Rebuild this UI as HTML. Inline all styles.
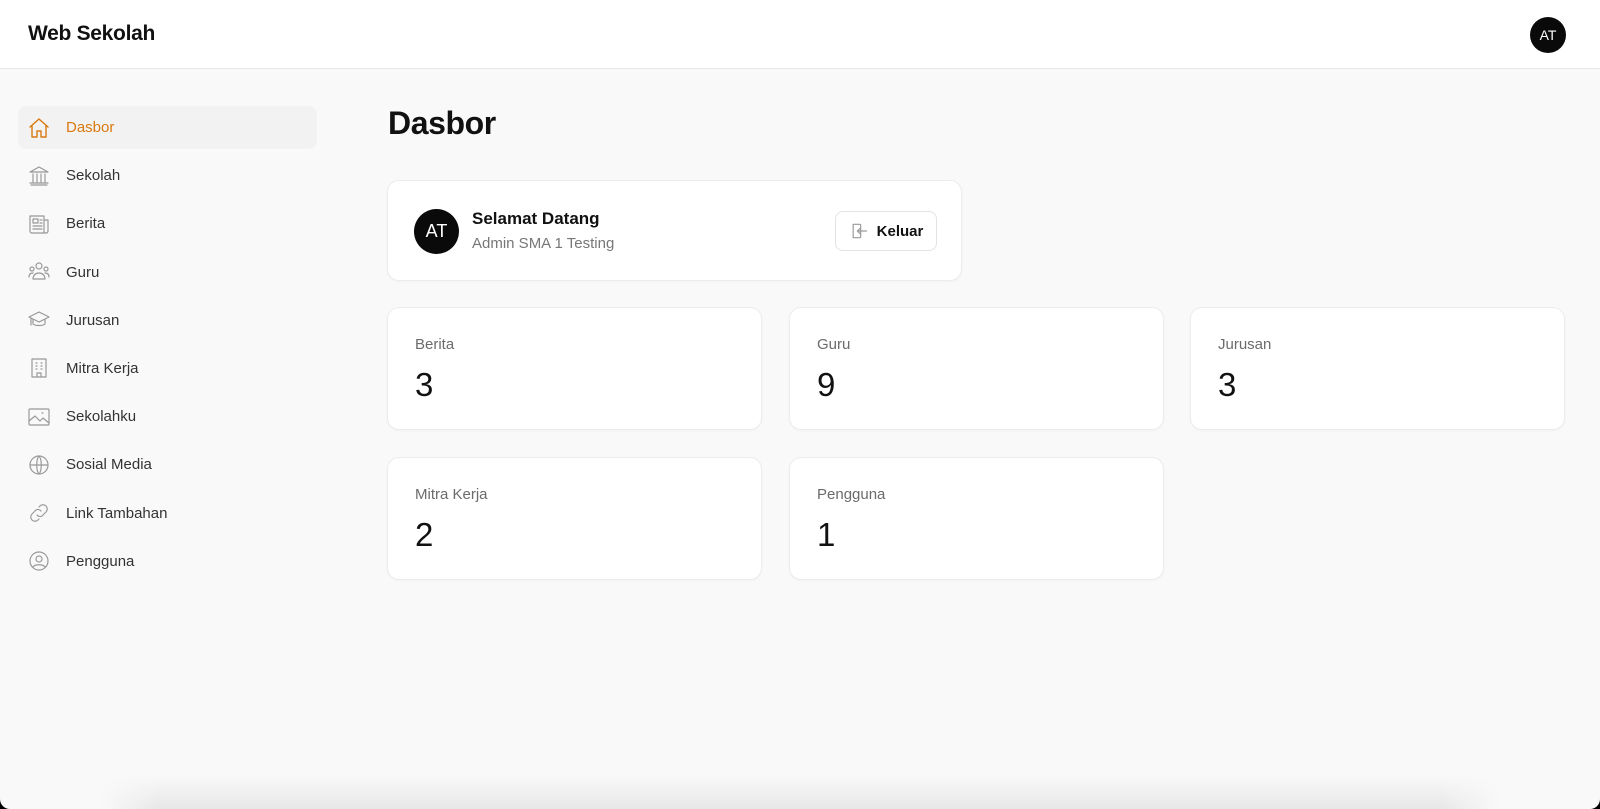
<!DOCTYPE html>
<html><head><meta charset="utf-8"><style>
*{box-sizing:border-box;margin:0;padding:0}
html,body{width:1600px;height:809px;overflow:hidden;background:#000}
body{font-family:"Liberation Sans",sans-serif;color:#111}
.page{position:absolute;left:0;top:0;width:1600px;height:809px;background:#f9f9f9;border-radius:0 0 10px 10px;overflow:hidden}
.hdr{position:absolute;left:0;top:0;width:1600px;height:69px;background:#fff;border-bottom:1px solid #e8e8e8}
.logo{position:absolute;left:28px;top:22px;font-size:21px;font-weight:700;letter-spacing:-0.3px}
.av{position:absolute;border-radius:50%;background:#0a0a0a;color:#fff;display:flex;align-items:center;justify-content:center}
.nav{position:absolute;left:18px;top:106px;width:299px}
.it{height:43px;margin-bottom:5.2px;display:flex;align-items:center;padding-left:9px;font-size:15px;color:#333;border-radius:8px}
.it svg{width:24px;height:24px;margin-right:15px;fill:none;stroke:#999;stroke-width:1.2;stroke-linecap:round;stroke-linejoin:round}
.it.on{background:#f2f2f2;color:#d97a0f}
.it.on svg{stroke:#d97a0f;stroke-width:1.4}
h1{position:absolute;left:388px;top:105px;font-size:32px;font-weight:700;letter-spacing:-0.4px}
.card{position:absolute;background:#fff;border:1px solid #ececec;border-radius:12px;box-shadow:0 1px 2px rgba(0,0,0,.03)}
.lbl{position:absolute;left:27px;top:28px;font-size:15px;color:#6b6b6b}
.num{position:absolute;left:27px;top:58px;font-size:33px;color:#111}
.btn{position:absolute;left:447px;top:30px;width:102px;height:40px;border:1px solid #e3e3e3;border-radius:8px;display:flex;align-items:center;justify-content:center;font-size:15px;font-weight:700;background:#fff}
.shadow{position:absolute;left:100px;top:775px;width:1400px;height:34px;background:linear-gradient(to bottom,rgba(0,0,0,0),rgba(0,0,0,.07));-webkit-mask-image:linear-gradient(to right,transparent,#000 60px,#000 1340px,transparent);mask-image:linear-gradient(to right,transparent,#000 60px,#000 1340px,transparent)}
</style></head><body><div class="page">
<div class="hdr"><div class="logo">Web Sekolah</div>
<div class="av" style="left:1530px;top:17px;width:36px;height:36px;font-size:14px">AT</div></div>
<div class="nav">
<div class="it on"><svg viewBox="0 0 24 24"><path d="M3 11l9-8 9 8M5 9.5V21h5v-6h4v6h5V9.5"/></svg>Dasbor</div>
<div class="it"><svg viewBox="0 0 24 24"><path d="M3 8l9-5 9 5H3zM4 21h16M3 19h18M6 10v8M10 10v8M14 10v8M18 10v8"/></svg>Sekolah</div>
<div class="it"><svg viewBox="0 0 24 24"><path d="M3 4h14v17H5a2 2 0 01-2-2V4zM17 8h4v11a2 2 0 01-2 2h-2M6 7h5v4H6zM13 8h2M13 11h2M6 14h9M6 17h9"/></svg>Berita</div>
<div class="it"><svg viewBox="0 0 24 24"><circle cx="12" cy="6" r="3"/><circle cx="5" cy="9" r="2"/><circle cx="19" cy="9" r="2"/><path d="M6 19c0-4 3-6 6-6s6 2 6 6H6zM2 17c0-3 2-4 4-4M22 17c0-3-2-4-4-4"/></svg>Guru</div>
<div class="it"><svg viewBox="0 0 24 24"><path d="M2 9l10-5 10 5-10 5-10-5zM6 11v5c2 2 10 2 12 0v-5M4 10v7"/></svg>Jurusan</div>
<div class="it"><svg viewBox="0 0 24 24"><path d="M5 3h14v18H5zM9 7h1M14 7h1M9 10h1M14 10h1M9 13h1M14 13h1M10 21v-4h4v4"/></svg>Mitra Kerja</div>
<div class="it"><svg viewBox="0 0 24 24"><rect x="2" y="4" width="20" height="16" rx="1"/><path d="M2 16l6-5 5 5 3-3 6 5M15 8h1"/></svg>Sekolahku</div>
<div class="it"><svg viewBox="0 0 24 24"><circle cx="12" cy="12" r="9"/><path d="M3 12h18M12 3c-3 3-3 15 0 18M12 3c3 3 3 15 0 18"/></svg>Sosial Media</div>
<div class="it"><svg viewBox="0 0 24 24"><path d="M10 14a4 4 0 005 1l4-4a4 4 0 00-6-6l-1 1M14 10a4 4 0 00-5-1l-4 4a4 4 0 006 6l1-1"/></svg>Link Tambahan</div>
<div class="it"><svg viewBox="0 0 24 24"><circle cx="12" cy="12" r="9"/><circle cx="12" cy="10" r="3"/><path d="M6 18c2-3 10-3 12 0"/></svg>Pengguna</div>
</div>
<h1>Dasbor</h1>
<div class="card" style="left:387px;top:180px;width:575px;height:101px">
<div class="av" style="left:26px;top:28px;width:45px;height:45px;font-size:18px">AT</div>
<div style="position:absolute;left:84px;top:28px;font-size:17px;font-weight:700;color:#111">Selamat Datang</div>
<div style="position:absolute;left:84px;top:54px;font-size:15px;color:#777">Admin SMA 1 Testing</div>
<div class="btn"><svg viewBox="0 0 24 24" width="20" height="20" style="margin-right:8px;fill:none;stroke:#999;stroke-width:1.4;stroke-linecap:round;stroke-linejoin:round"><path d="M5 4h8a1 1 0 011 1v14a1 1 0 01-1 1H5zM10 12h11M13 9l-3 3 3 3"/></svg>Keluar</div>
</div>
<div class="card" style="left:387px;top:307px;width:375px;height:123px"><div class="lbl">Berita</div><div class="num">3</div></div>
<div class="card" style="left:789px;top:307px;width:375px;height:123px"><div class="lbl">Guru</div><div class="num">9</div></div>
<div class="card" style="left:1190px;top:307px;width:375px;height:123px"><div class="lbl">Jurusan</div><div class="num">3</div></div>
<div class="card" style="left:387px;top:457px;width:375px;height:123px"><div class="lbl">Mitra Kerja</div><div class="num">2</div></div>
<div class="card" style="left:789px;top:457px;width:375px;height:123px"><div class="lbl">Pengguna</div><div class="num">1</div></div>
<div class="shadow"></div>
</div></body></html>
